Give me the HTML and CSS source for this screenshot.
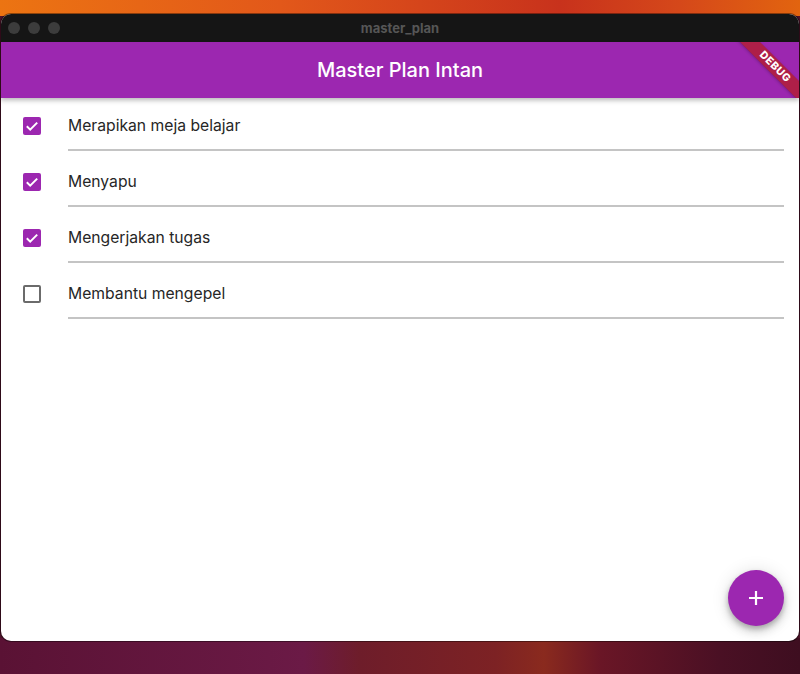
FILE: index.html
```html
<!DOCTYPE html>
<html lang="id">
<head>
<meta charset="utf-8">
<title>master_plan</title>
<link rel="stylesheet" href="styles.css">
</head>
<body>
<div class="desktop">
  <div class="window">
    <div class="titlebar">
      <div class="lights"><span class="light"></span><span class="light"></span><span class="light"></span></div>
      <div class="wtitle">master_plan</div>
    </div>
    <div class="app">
      <header class="appbar">
        <h1 class="apptitle">Master Plan Intan</h1>
        <div class="banner-clip"><div class="banner">DEBUG</div></div>
      </header>
      <main class="list">
        <div class="row">
          <span class="cb checked"><svg viewBox="0 0 18 18" width="18" height="18"><path d="M3.8 9.3l3.4 3.3L14.2 5.6" fill="none" stroke="#fff" stroke-width="2"/></svg></span>
          <div class="field"><span class="txt">Merapikan meja belajar</span></div>
        </div>
        <div class="row">
          <span class="cb checked"><svg viewBox="0 0 18 18" width="18" height="18"><path d="M3.8 9.3l3.4 3.3L14.2 5.6" fill="none" stroke="#fff" stroke-width="2"/></svg></span>
          <div class="field"><span class="txt">Menyapu</span></div>
        </div>
        <div class="row">
          <span class="cb checked"><svg viewBox="0 0 18 18" width="18" height="18"><path d="M3.8 9.3l3.4 3.3L14.2 5.6" fill="none" stroke="#fff" stroke-width="2"/></svg></span>
          <div class="field"><span class="txt">Mengerjakan tugas</span></div>
        </div>
        <div class="row">
          <span class="cb"></span>
          <div class="field"><span class="txt">Membantu mengepel</span></div>
        </div>
      </main>
      <button class="fab" aria-label="Tambah"><svg viewBox="0 0 24 24" width="24" height="24"><path d="M12 5v14M5 12h14" stroke="#fff" stroke-width="2.2" fill="none"/></svg></button>
    </div>
  </div>
</div>
</body>
</html>
```
FILE: styles.css
```css
html, body {
  margin: 0;
  padding: 0;
  height: 100%;
}
body {
  font-family: Inter, "Noto Sans", "Liberation Sans", sans-serif;
  background-color: #4d1228;
  background-image:
    linear-gradient(90deg, #ec7412 0%, #e2581a 35%, #c8321c 70%, #d5481a 85%, #e2640f 100%),
    linear-gradient(90deg, #5a1234 0%, #6b1a46 38%, #6e1d2a 45%, #7d2224 62%, #8a2a1e 68%, #6a1626 75%, #4a1024 90%, #3e0e20 100%);
  background-size: 100% 16px, 100% 36px;
  background-position: 0 0, 0 100%;
  background-repeat: no-repeat;
  overflow: hidden;
}
.desktop {
  height: 674px;
  padding: 14px 1px 33px 1px;
  box-sizing: border-box;
  display: flex;
}
.window {
  flex: 1;
  display: flex;
  flex-direction: column;
  border-radius: 10px;
  overflow: hidden;
  background: #fff;
  box-shadow: 0 0 0 1px rgba(0,0,0,0.4);
}
.titlebar {
  height: 28px;
  background: #151515;
  display: flex;
  align-items: center;
  position: relative;
  flex: none;
}
.lights {
  display: flex;
  gap: 8px;
  padding-left: 7px;
}
.light {
  width: 12px;
  height: 12px;
  border-radius: 50%;
  background: #3c3c3c;
}
.wtitle {
  position: absolute;
  left: 0;
  right: 0;
  text-align: center;
  color: #565656;
  font-size: 13px;
  font-weight: 700;
  top: 6px;
}
.app {
  flex: 1;
  display: flex;
  flex-direction: column;
  position: relative;
}
.appbar {
  height: 56px;
  background: #9c27b0;
  display: flex;
  align-items: center;
  justify-content: center;
  position: relative;
  box-shadow: 0 2px 4px rgba(0,0,0,0.2), 0 4px 5px rgba(0,0,0,0.08);
  z-index: 2;
  flex: none;
}
.apptitle {
  margin: 0;
  color: #fff;
  font-size: 20px;
  font-weight: 500;
}
.banner-clip {
  position: absolute;
  top: 0;
  right: 0;
  width: 80px;
  height: 56px;
  overflow: hidden;
}
.banner {
  position: absolute;
  width: 100px;
  height: 14px;
  left: 56px;
  top: 25px;
  margin-left: -50px;
  margin-top: -7px;
  transform: rotate(45deg);
  background: rgba(183, 28, 28, 0.7);
  color: #fff;
  font-size: 10.5px;
  font-weight: 800;
  letter-spacing: 0.6px;
  line-height: 14px;
  text-align: center;
  box-shadow: 0 1px 3px rgba(0,0,0,0.25);
}
.list {
  display: flex;
  flex-direction: column;
}
.row {
  height: 56px;
  display: flex;
  align-items: center;
  padding: 0 15px 0 22px;
}
.cb {
  width: 18px;
  height: 18px;
  box-sizing: border-box;
  border: 2px solid #6b6b6b;
  border-radius: 2px;
  flex: none;
  display: flex;
}
.cb.checked {
  border: none;
  background: #9c27b0;
}
.field {
  margin-left: 27px;
  flex: 1;
  height: 56px;
  box-sizing: border-box;
  border-bottom: 2px solid #c4c4c4;
  margin-top: -6px;
  display: flex;
  align-items: center;
  padding-top: 6px;
}
.txt {
  font-size: 15.7px;
  color: #262626;
}
.fab {
  position: absolute;
  right: 15px;
  bottom: 15px;
  width: 56px;
  height: 56px;
  border-radius: 50%;
  border: none;
  background: #9c27b0;
  display: flex;
  align-items: center;
  justify-content: center;
  padding: 0;
  box-shadow: 0 3px 5px rgba(0,0,0,0.2), 0 6px 10px rgba(0,0,0,0.14), 0 1px 18px rgba(0,0,0,0.12);
}
```
